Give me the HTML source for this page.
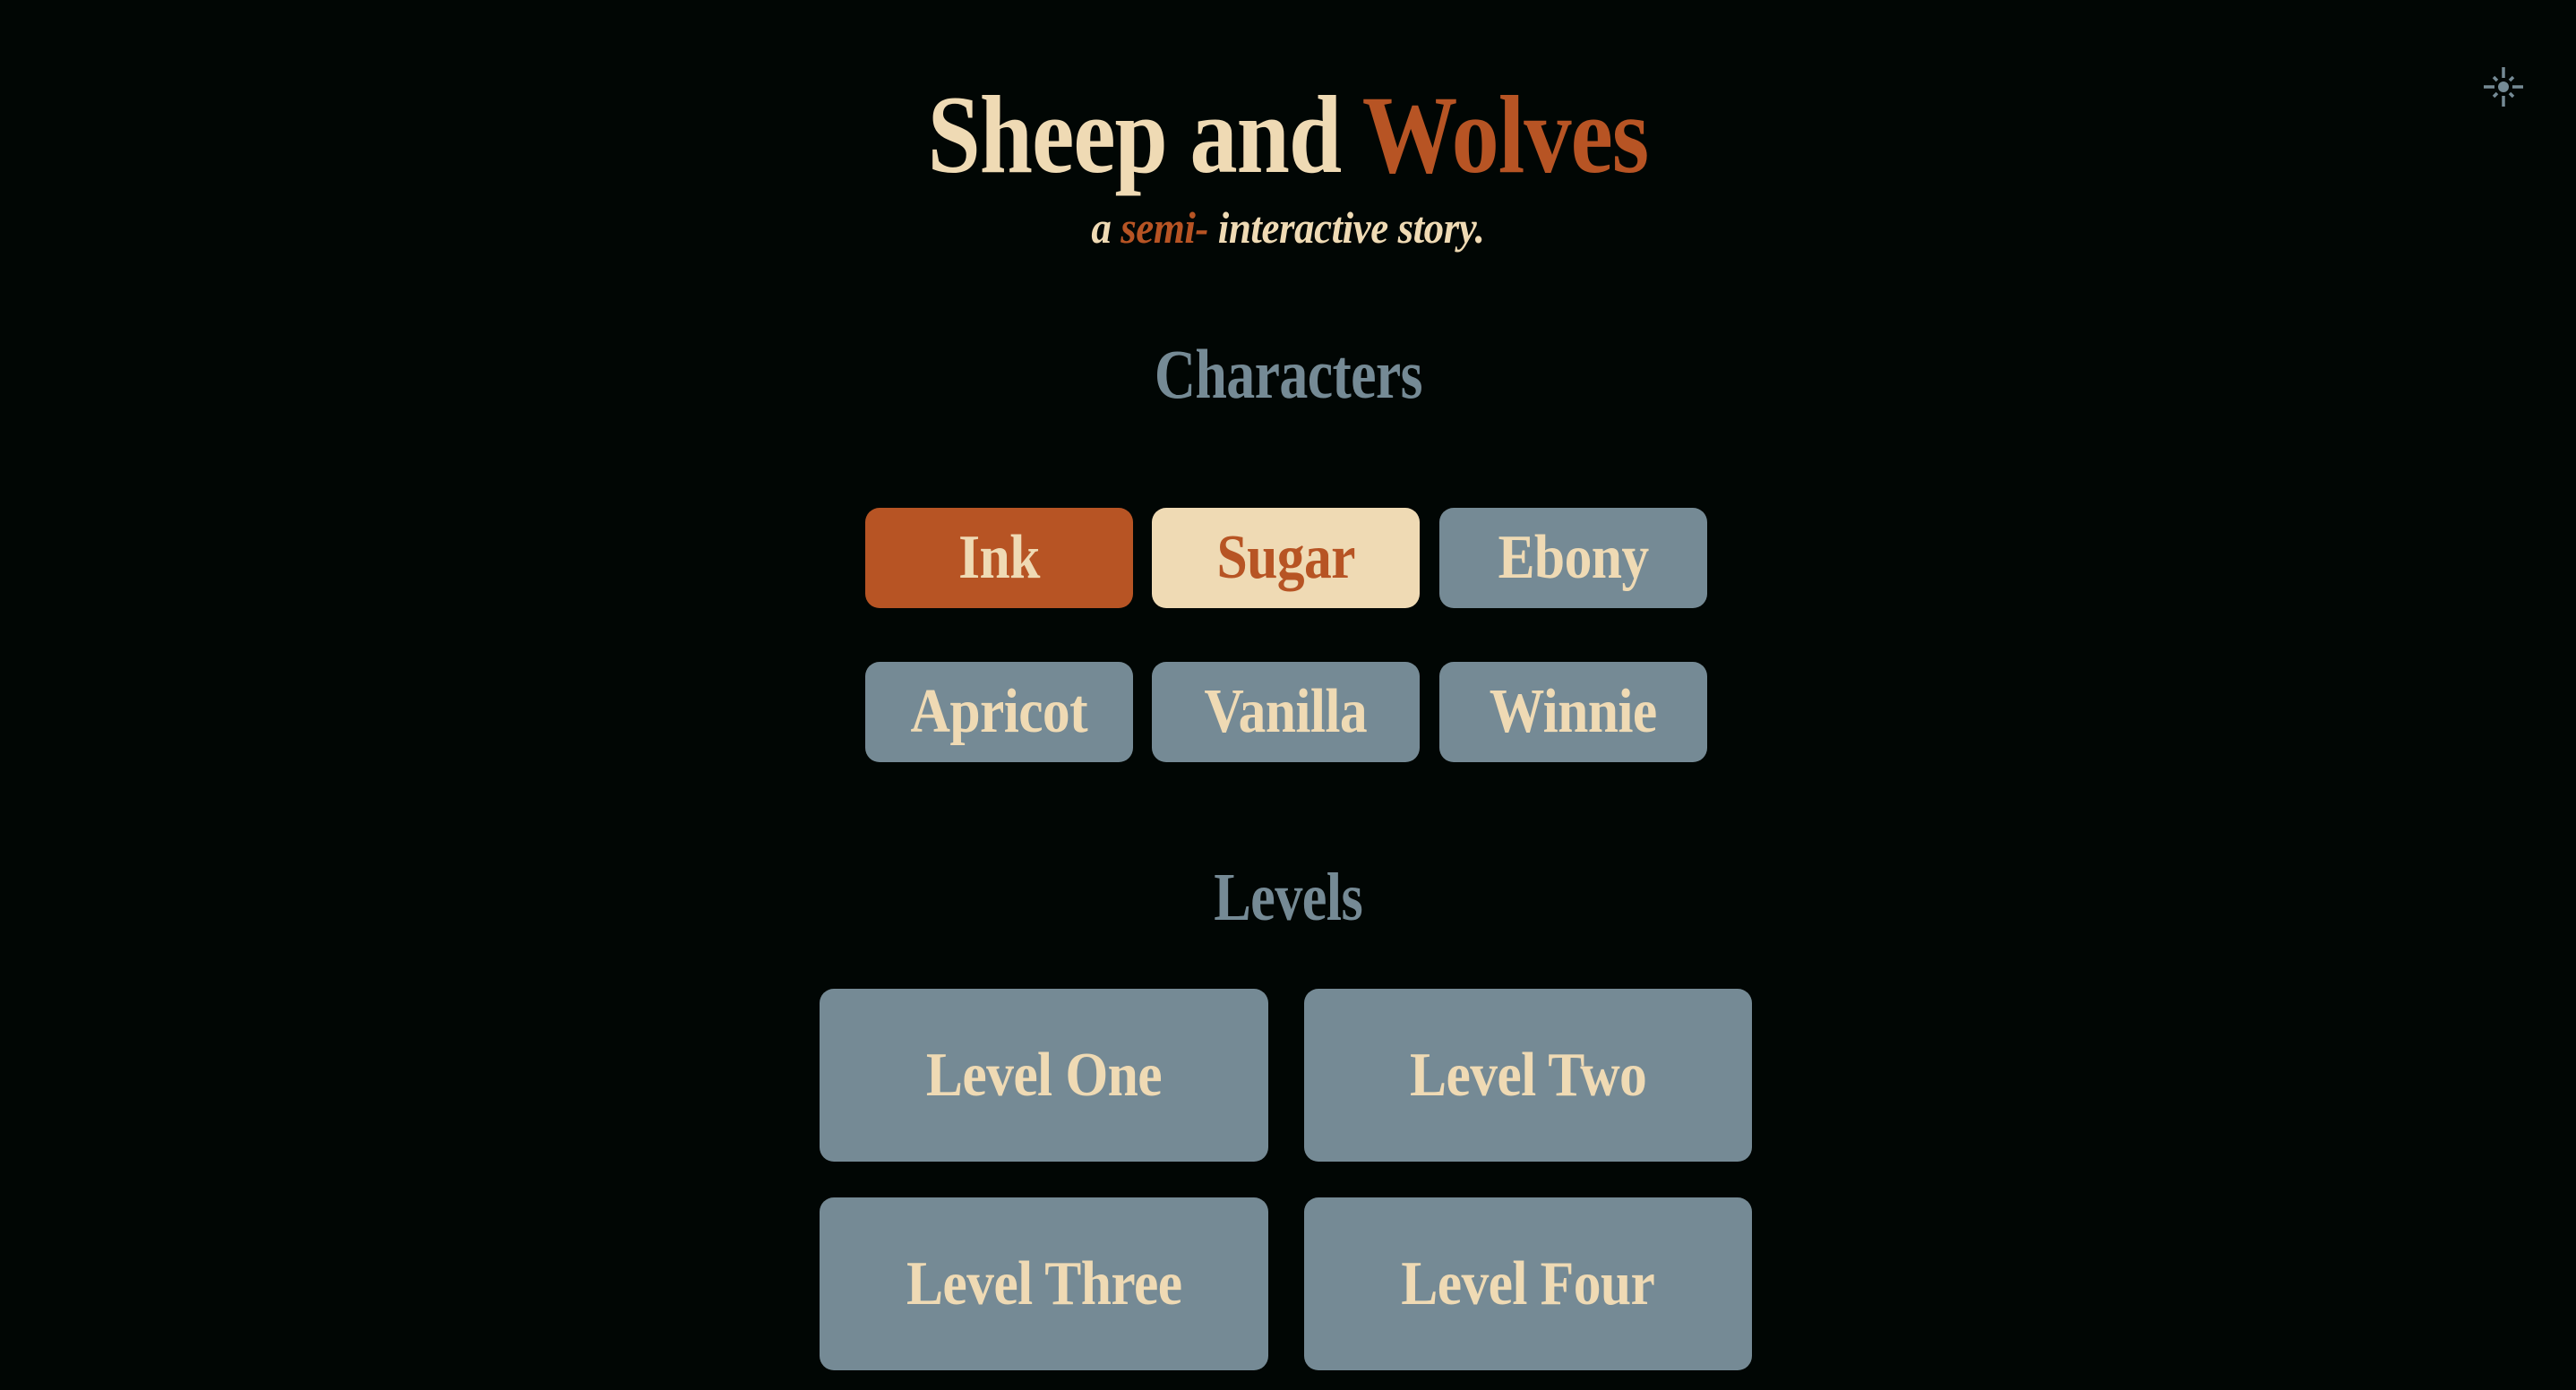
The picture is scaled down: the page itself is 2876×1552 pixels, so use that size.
<!DOCTYPE html>
<html><head><meta charset="utf-8"><style>
html,body{margin:0;padding:0;background:#010604;width:2876px;height:1552px;overflow:hidden}
body{position:relative;font-family:"Liberation Serif",serif;font-weight:bold}
.c{position:absolute;left:0;width:2876px;text-align:center;line-height:1;white-space:nowrap}
.s{display:inline-block;transform:scaleX(0.86);letter-spacing:-0.01em}
.cream{color:#efdab4}.or{color:#b75424}.sl{color:#758a95}
.btn{position:absolute;display:flex;align-items:center;justify-content:center;border-radius:16px;background:#758a95;color:#efdab4;font-size:70px;line-height:1}
.btn span{display:inline-block;transform:scaleX(0.88);letter-spacing:-0.01em}
</style></head><body>
<div class="c" style="top:89px;font-size:124px"><span class="s"><span class="cream">Sheep and </span><span class="or">Wolves</span></span></div>
<div class="c" style="top:229px;font-size:50px;font-style:italic"><span class="s" style="transform:scaleX(0.9)"><span class="cream">a </span><span class="or">semi-</span><span class="cream"> interactive story.</span></span></div>
<div class="c sl" style="top:379px;font-size:78px"><span class="s" style="transform:scaleX(0.82)">Characters</span></div>
<div class="btn" style="left:966px;top:567px;width:299px;height:112px;background:#b75424"><span>Ink</span></div>
<div class="btn" style="left:1286px;top:567px;width:299px;height:112px;background:#efdab4;color:#b75424"><span>Sugar</span></div>
<div class="btn" style="left:1607px;top:567px;width:299px;height:112px"><span>Ebony</span></div>
<div class="btn" style="left:966px;top:739px;width:299px;height:112px"><span>Apricot</span></div>
<div class="btn" style="left:1286px;top:739px;width:299px;height:112px"><span>Vanilla</span></div>
<div class="btn" style="left:1607px;top:739px;width:299px;height:112px"><span>Winnie</span></div>
<div class="c sl" style="top:964px;font-size:76px"><span class="s" style="transform:scaleX(0.82)">Levels</span></div>
<div class="btn" style="left:915px;top:1104px;width:501px;height:193px"><span>Level One</span></div>
<div class="btn" style="left:1456px;top:1104px;width:500px;height:193px"><span>Level Two</span></div>
<div class="btn" style="left:915px;top:1337px;width:501px;height:193px"><span>Level Three</span></div>
<div class="btn" style="left:1456px;top:1337px;width:500px;height:193px"><span>Level Four</span></div>
<svg style="position:absolute;left:2771px;top:73px" width="48" height="48" viewBox="-24 -24 48 48">
<g stroke="#758a95" stroke-width="3.5" fill="none">
<line x1="0" y1="-22" x2="0" y2="-10"/><line x1="0" y1="10" x2="0" y2="22"/>
<line x1="-22" y1="0" x2="-10" y2="0"/><line x1="10" y1="0" x2="22" y2="0"/>
<line x1="-11" y1="-11" x2="-7" y2="-7"/><line x1="11" y1="-11" x2="7" y2="-7"/>
<line x1="-11" y1="11" x2="-7" y2="7"/><line x1="11" y1="11" x2="7" y2="7"/>
</g><circle r="6" fill="#758a95"/></svg>
</body></html>
